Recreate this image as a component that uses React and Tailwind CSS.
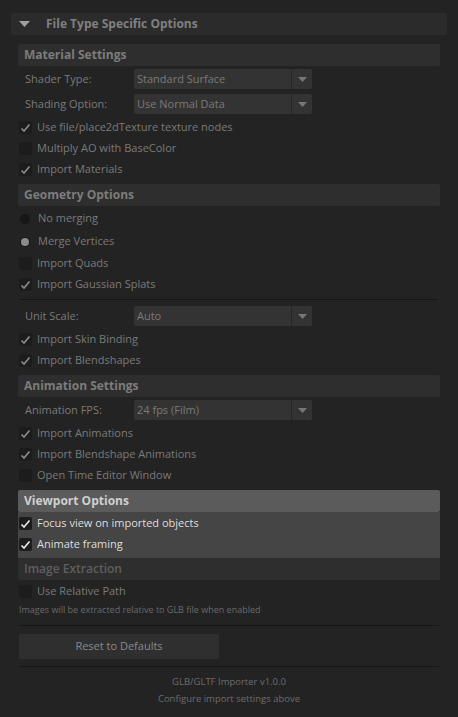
import React from 'react';

const font = { fontFamily: '"Open Sans", "Noto Sans", sans-serif' };

const SectionHeader = ({ title, active, dim }) => (
  <div
    className={`h-[22px] flex items-center px-[6px] rounded-[2px] text-[12px] font-bold ${
      active ? 'bg-[#5b5b5b] text-[#cfcfcf]' : 'bg-[#2e2e2e]'
    } ${dim ? 'text-[#5f5f5f] font-semibold' : active ? '' : 'text-[#7c7c7c]'}`}
  >
    {title}
  </div>
);

const Check = ({ label, checked, bright }) => (
  <div className="h-[21px] flex items-center pl-[1px]">
    <div className="w-[13px] h-[13px] rounded-[2px] bg-[#1c1c1c] flex items-center justify-center">
      {checked && (
        <svg width="11" height="10" viewBox="0 0 11 10">
          <path
            d="M1.5 5.5 L4 8 L9.5 1.5"
            fill="none"
            stroke={bright ? '#e6e6e6' : '#8a8a8a'}
            strokeWidth="1.7"
          />
        </svg>
      )}
    </div>
    <span className={`ml-[5px] text-[11px] ${bright ? 'text-[#dedede]' : 'text-[#7a7a7a]'}`}>{label}</span>
  </div>
);

const Radio = ({ label, selected }) => (
  <div className="h-[23px] flex items-center pl-[2px]">
    <div className="w-[10px] h-[10px] rounded-full bg-[#171717] flex items-center justify-center">
      {selected && <div className="w-[8px] h-[8px] rounded-full bg-[#8c8c8c]" />}
    </div>
    <span className="ml-[8px] text-[11px] text-[#7a7a7a]">{label}</span>
  </div>
);

const Dropdown = ({ label, value }) => (
  <div className="h-[20px] flex items-center">
    <span className="w-[116px] pl-[7px] text-[11px] text-[#7a7a7a]">{label}</span>
    <div className="w-[178px] h-[20px] flex rounded-[2px] bg-[#333333]">
      <div className="flex-1 flex items-center pl-[3px] text-[11px] text-[#7a7a7a] border-r border-[#262626]">
        {value}
      </div>
      <div className="w-[20px] flex items-center justify-center">
        <svg width="9" height="5" viewBox="0 0 9 5">
          <path d="M0 0 H9 L4.5 5 Z" fill="#777777" />
        </svg>
      </div>
    </div>
  </div>
);

const Divider = ({ inset }) => (
  <div className={`h-px bg-[#161616] ${inset ? 'mx-[2px]' : 'mx-[1px]'}`} />
);

export default function App() {
  return (
    <div className="min-h-screen bg-[#232323] pt-[13px] px-[11px]" style={font}>
      <div className="h-[22px] flex items-center rounded-[2px] bg-[#2b2b2b]">
        <svg className="ml-[8px]" width="11" height="6" viewBox="0 0 11 6">
          <path d="M0 0 H11 L5.5 6 Z" fill="#a0a0a0" />
        </svg>
        <span className="ml-[16px] text-[12px] font-bold text-[#808080]">File Type Specific Options</span>
      </div>

      <div className="px-[7px] pt-[9px]">
        <SectionHeader title="Material Settings" />
        <div className="pt-[3px] flex flex-col gap-[5px]">
          <Dropdown label="Shader Type:" value="Standard Surface" />
          <Dropdown label="Shading Option:" value="Use Normal Data" />
        </div>
        <div className="pt-[3px] pb-[4px]">
          <Check label="Use file/place2dTexture texture nodes" checked />
          <Check label="Multiply AO with BaseColor" />
          <Check label="Import Materials" checked />
        </div>

        <SectionHeader title="Geometry Options" />
        <div className="pt-[1px] pb-[4px]">
          <Radio label="No merging" />
          <Radio label="Merge Vertices" selected />
          <Check label="Import Quads" />
          <Check label="Import Gaussian Splats" checked />
        </div>
        <Divider inset />
        <div className="pt-[6px]">
          <Dropdown label="Unit Scale:" value="Auto" />
        </div>
        <div className="pt-[3px] pb-[4px]">
          <Check label="Import Skin Binding" checked />
          <Check label="Import Blendshapes" checked />
        </div>

        <SectionHeader title="Animation Settings" />
        <div className="pt-[3px]">
          <Dropdown label="Animation FPS:" value="24 fps (Film)" />
        </div>
        <div className="pt-[3px] pb-[4px]">
          <Check label="Import Animations" checked />
          <Check label="Import Blendshape Animations" checked />
          <Check label="Open Time Editor Window" />
        </div>

        <SectionHeader title="Viewport Options" active />
        <div className="bg-[#454545] pt-[1px] pb-[3px]">
          <Check label="Focus view on imported objects" checked bright />
          <Check label="Animate framing" checked bright />
        </div>

        <SectionHeader title="Image Extraction" dim />
        <div className="pt-[1px]">
          <Check label="Use Relative Path" />
        </div>
        <div className="pl-[1px] pt-[1px] text-[9px] leading-[14px] text-[#6a6a6a]">
          Images will be extracted relative to GLB file when enabled
        </div>
        <div className="pt-[8px]">
          <Divider />
        </div>
        <div className="pt-[6px] pl-[1px]">
          <button className="w-[200px] h-[25px] rounded-[2px] bg-[#2f2f2f] text-[11px] text-[#8a8a8a]">
            Reset to Defaults
          </button>
        </div>
        <div className="pt-[7px]">
          <Divider />
        </div>
        <div className="pt-[6px] flex flex-col items-center text-[9.5px] text-[#6c6c6c] leading-[17px]">
          <span>GLB/GLTF Importer v1.0.0</span>
          <span>Configure import settings above</span>
        </div>
      </div>
    </div>
  );
}
